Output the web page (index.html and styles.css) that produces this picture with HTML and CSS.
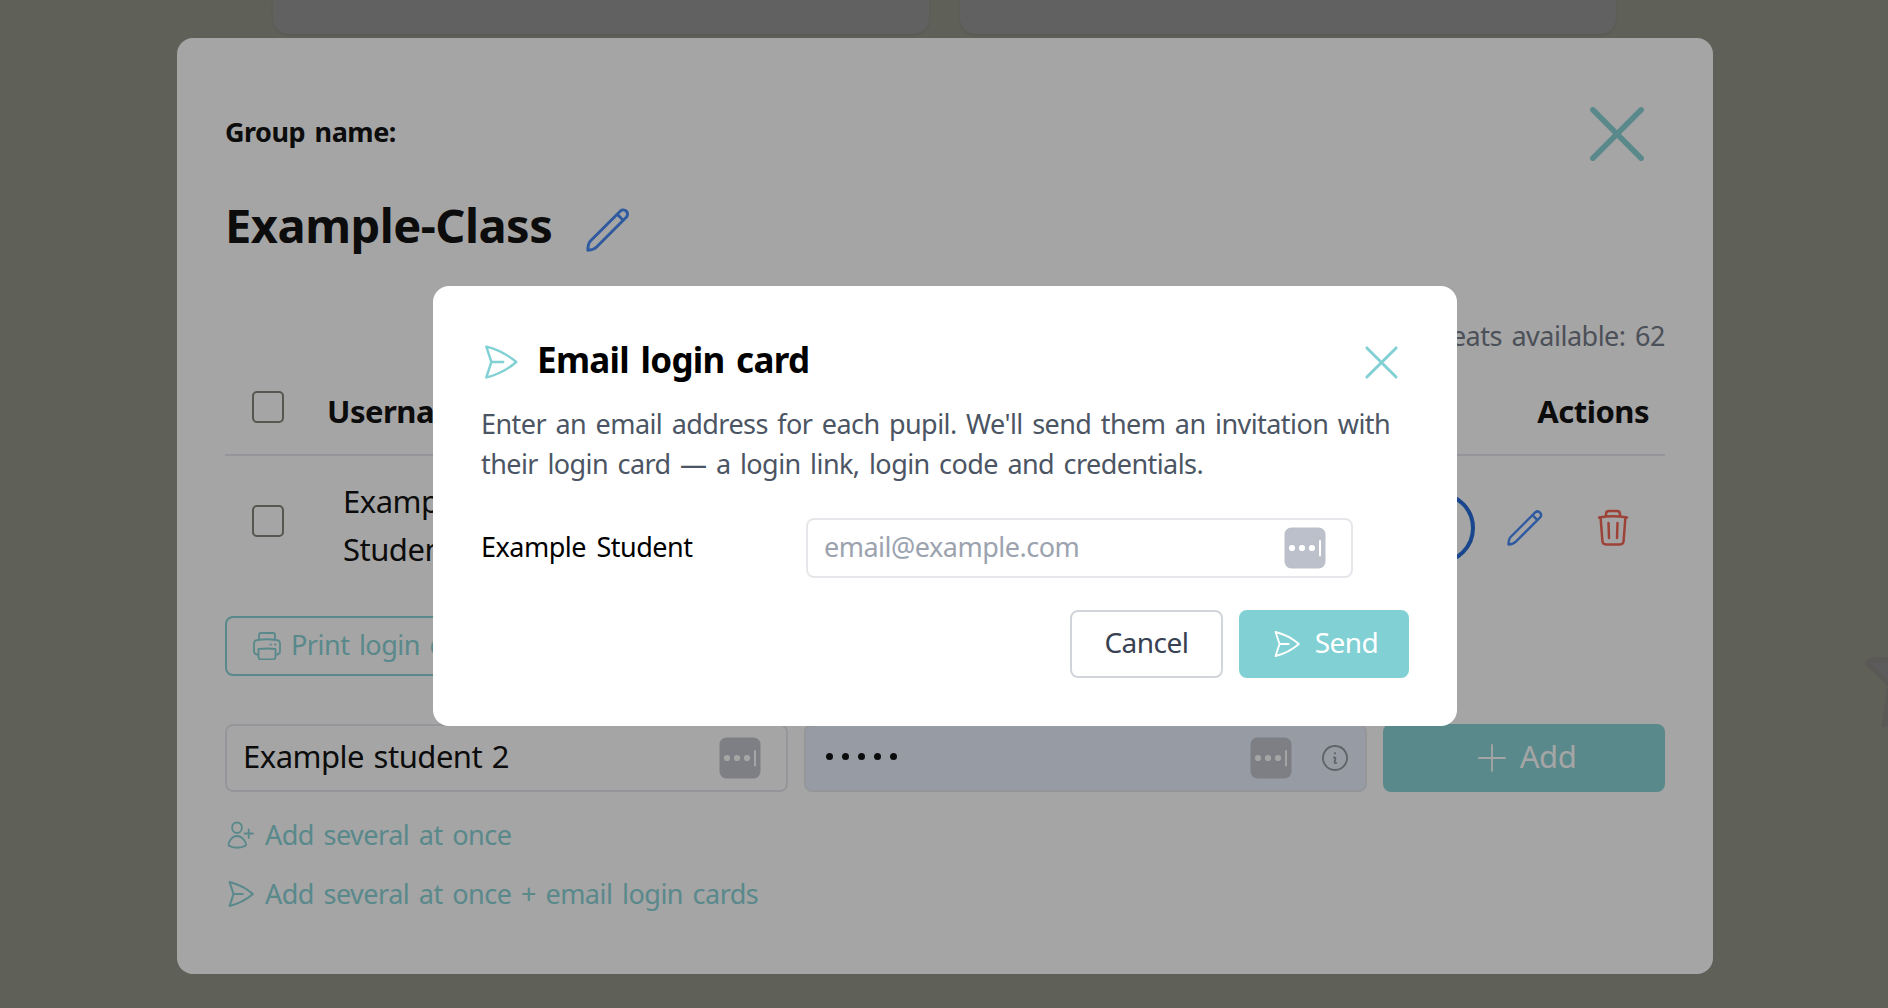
FILE: index.html
```html
<!DOCTYPE html>
<html lang="en">

<head>
	<meta charset="UTF-8" />
	<title>Email login card</title>
	<link rel="stylesheet" href="styles.css">
</head>

<body>
	<svg class="sprite">
		<symbol id="send" viewBox="0 0 24 24">
			<path d="M2.2 1.7C10 3.6 16.6 7.2 22.2 12 16.6 16.8 10 20.4 2.2 22.3L5.6 12zM5.6 12H13.5" />
		</symbol>
		<symbol id="close" viewBox="0 0 24 24">
			<path d="M2 2L22 22M22 2L2 22" />
		</symbol>
		<symbol id="pencil" viewBox="0 0 24 24">
			<path d="M1 23Q1.100 19.300 2.400 18L18.800 1.600A2.340 2.340 0 0 1 22.100 4.900L5.900 21.100Q4.200 22.900 1 23zM17 3.400L20.300 6.700" />
		</symbol>
		<symbol id="dots" viewBox="0 0 42 42">
			<rect class="plate" x="0.5" y="0.5" width="41" height="41" rx="7" />
			<circle cx="8" cy="21" r="3.1" />
			<circle cx="18" cy="21" r="3.1" />
			<circle cx="28" cy="21" r="3.1" />
			<rect x="35" y="13" width="2" height="16.5" rx="1" />
		</symbol>
	</svg>

	<div class="page">
		<div class="card"></div>
		<div class="card"></div>
	</div>
	<svg class="star" viewBox="0 0 26 76"><path d="M34 3L8 4.500Q4 6 7 9L28 29L22 69L34 65" /></svg>

	<div class="group">
		<div class="group-head">
			<p class="label">Group name:</p>
			<svg class="group-close"><use href="#close" /></svg>
		</div>
		<div class="title">
			<h1>Example-Class</h1>
			<svg><use href="#pencil" /></svg>
		</div>
		<p class="seats">Seats available: 62</p>
		<div class="row head">
			<span class="check"></span>
			<b>Username</b>
			<b class="actions-label">Actions</b>
		</div>
		<div class="row">
			<span class="check"></span>
			<p class="name">Example<br>Student</p>
			<div class="actions">
				<span class="ring"></span>
				<svg class="edit"><use href="#pencil" /></svg>
				<svg class="trash" viewBox="0 0 32 38">
					<path d="M2 8.5Q16 6 30 8.5M9 7V5Q9 2 12 2H20Q23 2 23 5V7M3.6 8.5L5.4 32Q5.7 35.5 9 35.5H23Q26.300 35.500 26.600 32L28.400 8.500M11.500 14L12 29M20.500 14L20 29" />
				</svg>
			</div>
		</div>
		<div class="print">
			<svg viewBox="0 0 28 28">
				<path d="M6 7V3Q6 1 8 1H20Q22 1 22 3V7M5 22.500H4Q1 22 1 19V12Q1 8 5 8Q14 6.500 23 8Q27 8 27 12V19Q27 22 24 22.500H23M5.500 17Q14 16 22.500 17V25Q22.500 27.500 20 27.500H8Q5.500 27.500 5.500 25zM17.500 12.500H18M22 12.500H22.500" />
			</svg>
			<span>Print login cards</span>
		</div>
		<div class="add-row">
			<div class="field">
				<span class="student">Example student 2</span>
				<svg class="dots"><use href="#dots" /></svg>
			</div>
			<div class="field filled">
				<span class="password"><i></i><i></i><i></i><i></i><i></i></span>
				<svg class="dots"><use href="#dots" /></svg>
				<svg class="info" viewBox="0 0 26 26"><path d="M13 1A12 12 0 1 1 12.990 1M13 8V8.600M11.800 12.500Q13.500 12 13.500 13.500L12.500 17Q12.500 18.500 14.200 18" /></svg>
			</div>
			<div class="add">
				<svg viewBox="0 0 28 28"><path d="M14 1V27M1 14H27" /></svg>
				<span>Add</span>
			</div>
		</div>
		<div class="link">
			<svg viewBox="0 0 28 28"><path d="M10 1.500C17 1.500 16 12 10 12C4 12 3 1.500 10 1.500zM10 15C15 15 19 20 19 24.500C14 27.500 6 27.500 1.500 24.500C1.500 20 5 15 10 15zM17.500 12.500H26M21.700 8.300V17" /></svg>
			<span>Add several at once</span>
		</div>
		<div class="link">
			<svg><use href="#send" /></svg>
			<span>Add several at once + email login cards</span>
		</div>
	</div>

	<div class="overlay">
		<div class="dialog">
			<div class="dialog-head">
				<svg class="dialog-icon"><use href="#send" /></svg>
				<h2>Email login card</h2>
				<svg class="dialog-close"><use href="#close" /></svg>
			</div>
			<p class="intro">Enter an email address for each pupil. We'll send them an invitation with<br>their login card — a login link, login code and credentials.</p>
			<div class="pupil">
				<span class="pupil-name">Example Student</span>
				<div class="email">
					<span>email@example.com</span>
					<svg class="dots"><use href="#dots" /></svg>
				</div>
			</div>
			<div class="buttons">
				<div class="cancel"><span>Cancel</span></div>
				<div class="send">
					<svg><use href="#send" /></svg>
					<span>Send</span>
				</div>
			</div>
		</div>
	</div>
</body>

</html>
```
FILE: styles.css
```css
* {
	box-sizing: border-box;
}

body {
	margin: 0;
	height: 1008px;
	overflow: hidden;
	position: relative;
	background: #8a8c7f;
	color: #000;
	font-family: "Noto Sans", sans-serif;
	font-size: 27px;
	line-height: 40px;
	letter-spacing: -0.5px;
	word-spacing: 3px;
}

h1, h2, p {
	margin: 0;
}

svg {
	display: block;
	flex: none;
	fill: none;
	stroke: currentColor;
	stroke-width: 1.6;
	stroke-linecap: round;
	stroke-linejoin: round;
}

span, b, h1, h2 {
	white-space: nowrap;
}

.sprite {
	position: absolute;
	width: 0;
	height: 0;
}

/* page behind the dialogs */

.page {
	display: flex;
	justify-content: center;
	gap: 31px;
	padding-left: 1px;
}

.card {
	width: 656px;
	height: 34px;
	border-radius: 0 0 15px 15px;
	background: #8e8e8e;
	box-shadow: 0 1px 2px #7e7e74;
}

.star {
	position: absolute;
	left: 1862px;
	top: 656px;
	width: 26px;
	height: 76px;
	fill: #858588;
	color: #84817b;
	stroke-width: 5;
}

/* group dialog */

.group {
	position: absolute;
	left: 177px;
	top: 38px;
	width: 1536px;
	height: 936px;
	padding: 62px 48px 0;
	border-radius: 16px;
	background: #fff;
}

.group-head {
	display: flex;
	justify-content: space-between;
	height: 80px;
}

.label {
	padding-top: 12px;
	font-weight: 700;
}

.group-close {
	width: 58px;
	height: 58px;
	margin: 5px 19px 0 0;
	color: #80d0d4;
	stroke-width: 2.3;
}

.title {
	display: flex;
	align-items: center;
	gap: 34px;
	height: 96px;
}

h1 {
	padding-bottom: 6px;
	font-size: 47px;
	line-height: 64px;
}

.title svg {
	width: 44px;
	height: 44px;
	margin-top: 3px;
	color: #3b82f6;
	stroke-width: 1.6;
}

.seats {
	margin-top: 40px;
	text-align: right;
	color: #6b7280;
}

.row {
	display: flex;
	height: 144px;
}

.head {
	height: 100px;
	border-bottom: 2px solid #e5e7eb;
	font-size: 31px;
}

.check {
	width: 32px;
	height: 32px;
	margin: 49px 0 0 27px;
	border: 2px solid #7d7d73;
	border-radius: 5px;
}

.head .check {
	margin-top: 35px;
}

.head b {
	margin: 35px 0 0 43px;
}

.head .actions-label {
	margin: 35px 16px 0 auto;
}

.name {
	padding: 21px 0 0 59px;
	font-size: 31px;
	line-height: 48px;
}

.actions {
	display: flex;
	align-items: center;
	margin-left: auto;
	padding-right: 36px;
}

.ring {
	width: 72px;
	height: 72px;
	margin-right: 32px;
	border: 4px solid #1662d8;
	border-radius: 50%;
}

.edit {
	width: 36px;
	height: 36px;
	margin-right: 54px;
	color: #3b82f6;
}

.trash {
	width: 32px;
	height: 38px;
	color: #f25a48;
	stroke-width: 2.5;
}

.print {
	display: flex;
	align-items: center;
	gap: 10px;
	width: 330px;
	height: 60px;
	margin-top: 16px;
	padding-left: 26px;
	border: 2px solid #80d0d4;
	border-radius: 8px;
	color: #80d0d4;
}

.print span {
	padding-bottom: 3px;
}

.print svg, .link svg, .add svg {
	width: 28px;
	height: 28px;
	stroke-width: 1.8;
}

.add-row {
	display: grid;
	grid-template-columns: 563px 563px 282px;
	gap: 16px;
	height: 68px;
	margin: 48px 0 23px;
}

.field {
	display: flex;
	align-items: center;
	padding: 0 25px 0 16px;
	border: 2px solid #e5e7eb;
	border-radius: 8px;
	font-size: 31px;
}

.student, .add span {
	padding-bottom: 5px;
}

.student {
	word-spacing: 2px;
}

.filled {
	background: #e8f0fe;
}

.dots {
	width: 42px;
	height: 42px;
	margin-left: auto;
	fill: #fff;
	stroke: none;
}

.plate {
	fill: #bcc0ca;
}

.password {
	display: flex;
	gap: 9px;
	padding: 0 0 4px 4px;
}

.password i {
	width: 7px;
	height: 7px;
	border-radius: 50%;
	background: #000;
}

.info {
	width: 26px;
	height: 26px;
	margin: 0 -8px 0 30px;
	color: #8c8f98;
	stroke-width: 1.8;
}

.add {
	display: flex;
	align-items: center;
	justify-content: center;
	gap: 14px;
	padding-left: 6px;
	border-radius: 8px;
	background: #80d0d4;
	color: #fff;
	font-size: 31px;
}

.link {
	display: flex;
	align-items: center;
	gap: 10px;
	height: 40px;
	margin-bottom: 19px;
	padding-left: 2px;
	color: #80d0d4;
}

/* email dialog */

.overlay {
	position: absolute;
	inset: 0;
	display: flex;
	padding: 286px 0 0 433px;
	background: rgba(30, 30, 30, 0.4);
}

.dialog {
	width: 1024px;
	height: 440px;
	padding: 48px;
	border-radius: 16px;
	background: #fff;
}

.dialog-head {
	display: flex;
	align-items: center;
	height: 56px;
}

.dialog-icon {
	width: 36px;
	height: 36px;
	margin: 0 18px 0 2px;
	color: #80d0d4;
}

h2 {
	padding-bottom: 5px;
	font-size: 35px;
	line-height: 44px;
	letter-spacing: -0.7px;
}

.dialog-close {
	width: 35px;
	height: 35px;
	margin: 0 10px 0 auto;
	color: #80d0d4;
	stroke-width: 2;
}

.intro {
	margin-top: 14px;
	color: #4b5563;
	letter-spacing: -0.57px;
}

.pupil {
	display: flex;
	align-items: center;
	height: 60px;
	margin-top: 34px;
}

.pupil-name {
	width: 325px;
	padding-bottom: 3px;
	word-spacing: 4px;
}

.email {
	display: flex;
	align-items: center;
	width: 547px;
	height: 60px;
	padding: 0 25px 0 16px;
	border: 2px solid #e5e7eb;
	border-radius: 8px;
	color: #9ca3af;
}

.email span {
	padding-bottom: 3px;
}

.buttons span {
	padding-bottom: 4px;
}

.buttons {
	display: flex;
	justify-content: flex-end;
	gap: 16px;
	margin-top: 32px;
}

.cancel, .send {
	display: flex;
	align-items: center;
	justify-content: center;
	width: 153px;
	height: 68px;
	border: 2px solid #d1d5db;
	border-radius: 8px;
	color: #374151;
	font-size: 28px;
}

.send {
	gap: 14px;
	width: 170px;
	padding-left: 3px;
	border: 0;
	background: #80d0d4;
	color: #fff;
}

.send svg {
	width: 28px;
	height: 28px;
}
```
